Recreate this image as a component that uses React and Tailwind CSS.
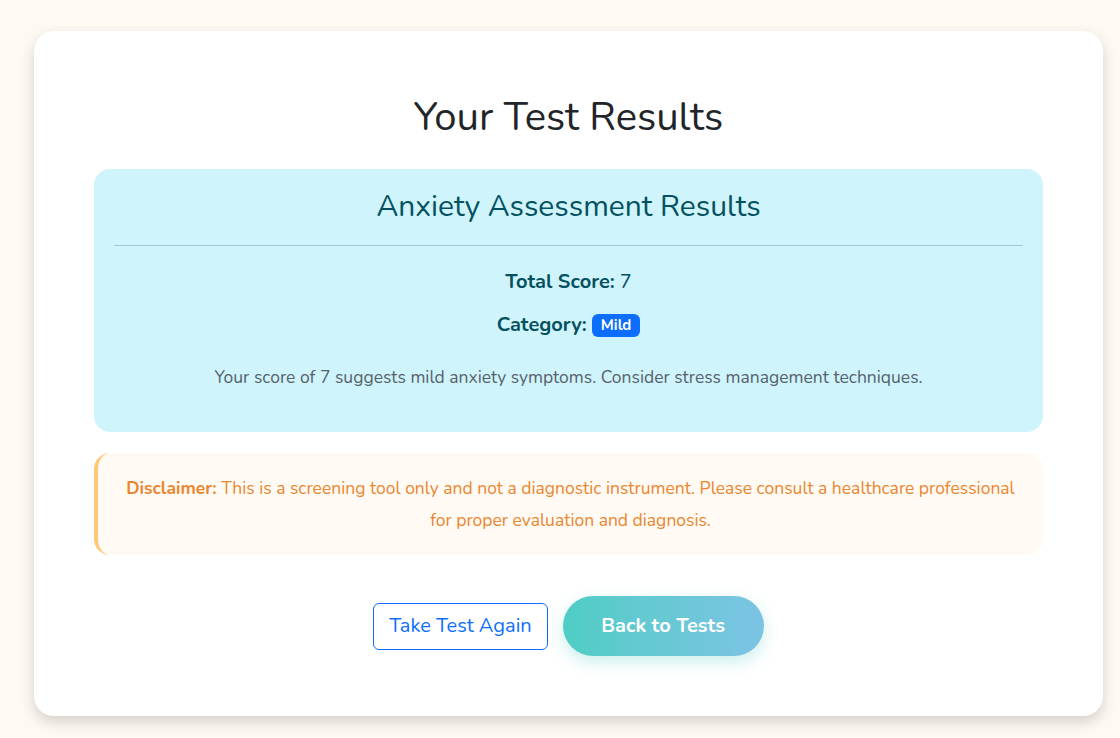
import React from "react";

const font = { fontFamily: "Nunito, Lato, 'Noto Sans', sans-serif" };

export default function App() {
  return (
    <div className="min-h-screen bg-[#fff9f3] pt-[31px] pl-[34px] pr-[17px] pb-[22px]" style={font}>
      <div className="w-[1069px] bg-white rounded-[20px] shadow-[0_6px_14px_rgba(0,0,0,0.16)] px-[60px] pt-[62px] pb-[60px]">
        <h1 className="text-center text-[40px] leading-[1.2] text-[#212529] mb-[28px]">Your Test Results</h1>

        {/* Result box */}
        <div className="bg-[#cff4fc] rounded-[16px] px-[20px] pt-[20px] pb-[42px]">
          <h2 className="text-center text-[30px] leading-[1.2] text-[#055160]">Anxiety Assessment Results</h2>
          <hr className="mt-[20px] border-0 border-t border-[#9ccdd6]" />
          <p className="text-center text-[20px] leading-[30px] text-[#055160] mt-[21px]">
            <span className="font-bold">Total Score:</span> 7
          </p>
          <p className="text-center text-[20px] leading-[30px] text-[#055160] mt-[13px] flex items-center justify-center gap-[5px]">
            <span className="font-bold">Category:</span>
            <span className="bg-[#0d6efd] text-white text-[15px] font-bold leading-none rounded-[6px] px-[9px] py-[4px]">Mild</span>
          </p>
          <p className="text-center text-[17.5px] leading-[26px] text-[#56626b] mt-[24px]">
            Your score of 7 suggests mild anxiety symptoms. Consider stress management techniques.
          </p>
        </div>

        {/* Disclaimer */}
        <div className="mt-[21px] bg-[#fffaf3] rounded-[16px] border-l-[4px] border-[#ffc878] px-[20px] py-[19px]">
          <p className="text-center text-[17.5px] leading-[32px] text-[#ea8630]">
            <span className="font-bold">Disclaimer:</span> This is a screening tool only and not a diagnostic instrument. Please consult a healthcare professional for proper evaluation and diagnosis.
          </p>
        </div>

        {/* Buttons */}
        <div className="mt-[41px] flex items-center justify-center gap-[15px]">
          <button className="h-[47px] px-[15px] border border-[#0d6efd] rounded-[6px] text-[#0d6efd] text-[20px] bg-white">
            Take Test Again
          </button>
          <button className="h-[60px] w-[201px] rounded-full bg-gradient-to-r from-[#4ecdc4] to-[#7cc3e4] text-white text-[20px] font-bold shadow-[0_6px_16px_rgba(78,205,196,0.3)]">
            Back to Tests
          </button>
        </div>
      </div>
    </div>
  );
}
